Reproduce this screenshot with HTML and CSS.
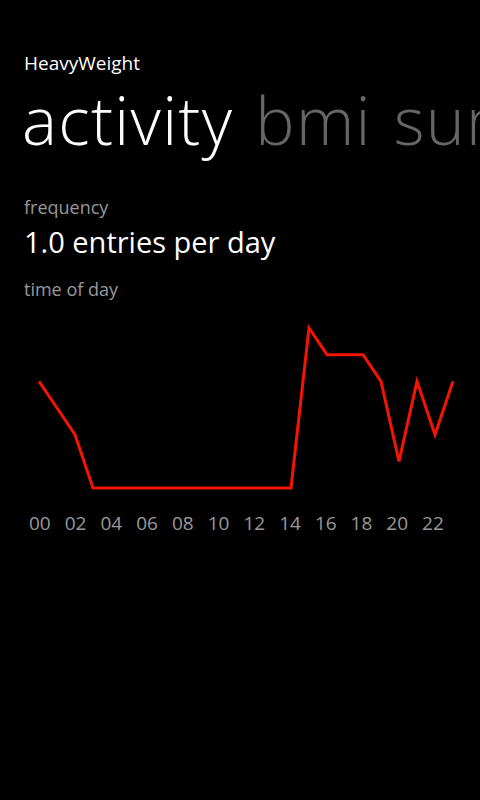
FILE: index.html
```html
<!DOCTYPE html>
<html lang="en">
<head>
  <meta charset="UTF-8">
  <meta name="viewport" content="width=device-width, initial-scale=1.0">
  <title>HeavyWeight</title>
  <link rel="stylesheet" href="styles.css">
</head>
<body>

<div class="pivot">

  <!-- Pivot title and headers -->
  <div class="pivot-title">HeavyWeight</div>
  <div class="pivot-headers">
    <span class="header active">activity</span>
    <span class="header">bmi</span>
    <span class="header">summary</span>
  </div>

  <!-- Activity page -->
  <div class="content">
    <div class="label">frequency</div>
    <div class="value">1.0 entries per day</div>
    <div class="label time-label">time of day</div>

    <svg class="chart" width="456" height="190" viewBox="0 0 456 190">
      <polyline class="line" points="15,71.3 33,98 51,124.7 69,178 267,178 285,18 303,44.7 339,44.7 357,71.3 375,151.3 393,71.3 411,124.7 429,71.3"/>
    </svg>

    <div class="hours">
      <span>00</span>
      <span>02</span>
      <span>04</span>
      <span>06</span>
      <span>08</span>
      <span>10</span>
      <span>12</span>
      <span>14</span>
      <span>16</span>
      <span>18</span>
      <span>20</span>
      <span>22</span>
    </div>
  </div>

</div>

</body>
</html>
```

FILE: styles.css
```css
body {
  margin: 0;
  padding: 0;
  font-family: "Open Sans", "Noto Sans", sans-serif;
  background: #000000;
  color: #ffffff;
  overflow: hidden;
}
.pivot {
  width: 480px;
  height: 800px;
  overflow: hidden;
  padding-top: 52px;
  box-sizing: border-box;
}
.pivot-title {
  padding-left: 24px;
  font-size: 19px;
  line-height: 22px;
}
.pivot-headers {
  display: flex;
  gap: 22px;
  padding-left: 22px;
  white-space: nowrap;
  overflow: hidden;
  font-size: 66px;
  font-weight: 300;
  letter-spacing: 1.3px;
  line-height: 90px;
}
.header {
  color: #666666;
}
.header.active {
  color: #ffffff;
}
.content {
  padding-left: 24px;
  margin-top: 31px;
}
.label {
  font-size: 18px;
  line-height: 24px;
  color: #999999;
}
.value {
  margin-top: 4px;
  font-size: 29px;
  line-height: 38px;
}
.time-label {
  margin-top: 16px;
}
.chart {
  display: block;
  margin-top: 9px;
}
.line {
  fill: none;
  stroke: #f41400;
  stroke-width: 3;
}
.hours {
  display: flex;
  gap: 14px;
  margin-top: 11px;
  margin-left: 5px;
  font-size: 19px;
  line-height: 24px;
  color: #999999;
}
```
